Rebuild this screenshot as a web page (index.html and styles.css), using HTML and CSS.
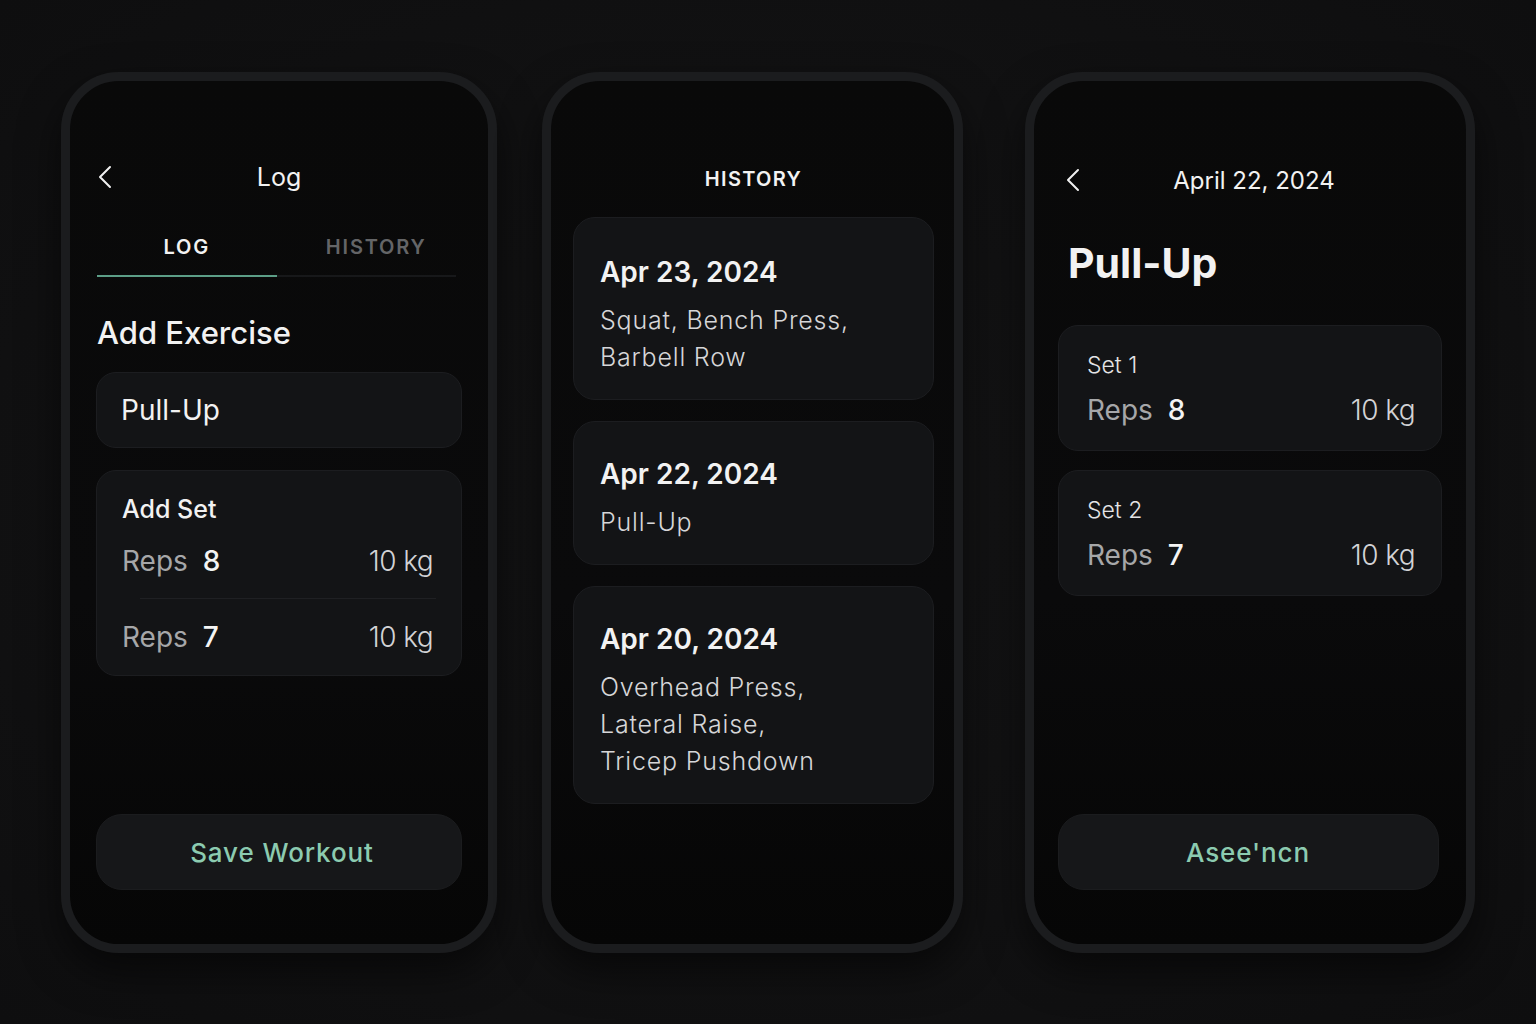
FILE: index.html
```html
<!DOCTYPE html>
<html lang="en">
<head>
    <meta charset="UTF-8">
    <meta name="viewport" content="width=device-width, initial-scale=1.0">
    <title>Workout Log</title>
    <link rel="stylesheet" href="styles.css">
</head>
<body>

    <div class="stage">

        <!-- pantalla 1: registrar -->
        <section class="phone phone-log">
            <header class="topbar">
                <span class="back">
                    <svg width="16" height="24" viewBox="0 0 16 24"><path d="M13 2 L3 12 L13 22" /></svg>
                </span>
                <h1 class="topbar-title">Log</h1>
                <span></span>
            </header>

            <nav class="tabs">
                <span class="tab active">LOG</span>
                <span class="tab tab-history">HISTORY</span>
            </nav>

            <h2 class="section-title">Add Exercise</h2>

            <div class="card input-card">Pull-Up</div>

            <div class="card add-set">
                <div class="add-set-title">Add Set</div>
                <div class="set-row first">
                    <span class="reps">Reps <b class="reps-count">8</b></span>
                    <span class="weight">10 kg</span>
                </div>
                <div class="divider"></div>
                <div class="set-row">
                    <span class="reps">Reps <b class="reps-count">7</b></span>
                    <span class="weight">10 kg</span>
                </div>
            </div>

            <button class="action-button">Save Workout</button>
        </section>

        <!-- pantalla 2: historial -->
        <section class="phone phone-history">
            <h1 class="history-title">HISTORY</h1>

            <div class="card history-card">
                <div class="history-date">Apr 23, 2024</div>
                <div class="history-items">Squat, Bench Press,<br>Barbell Row</div>
            </div>
            <div class="card history-card">
                <div class="history-date">Apr 22, 2024</div>
                <div class="history-items">Pull-Up</div>
            </div>
            <div class="card history-card">
                <div class="history-date">Apr 20, 2024</div>
                <div class="history-items">Overhead Press,<br>Lateral Raise,<br>Tricep Pushdown</div>
            </div>
        </section>

        <!-- pantalla 3: detalle -->
        <section class="phone phone-detail">
            <header class="topbar">
                <span class="back">
                    <svg width="16" height="24" viewBox="0 0 16 24"><path d="M13 2 L3 12 L13 22" /></svg>
                </span>
                <h1 class="topbar-title date-title">April 22, 2024</h1>
                <span></span>
            </header>

            <h2 class="exercise-title">Pull-Up</h2>

            <div class="card set-card">
                <div class="set-label">Set 1</div>
                <div class="set-row">
                    <span class="reps">Reps <b class="reps-count">8</b></span>
                    <span class="weight">10 kg</span>
                </div>
            </div>
            <div class="card set-card">
                <div class="set-label">Set 2</div>
                <div class="set-row">
                    <span class="reps">Reps <b class="reps-count">7</b></span>
                    <span class="weight">10 kg</span>
                </div>
            </div>

            <button class="action-button detail-button">Asee'ncn</button>
        </section>

    </div>

</body>
</html>
```

FILE: styles.css
```css
/* base */

* {
  box-sizing: border-box;
}
body {
  margin: 0;
  background: radial-gradient(ellipse at center, #141415 0%, #111112 60%, #0e0e0f 100%);
  font-family: Inter, "Noto Sans", sans-serif;
  color: #f2f2f2;
  height: 1024px;
  overflow: hidden;
}
h1, h2 {
  margin: 0;
  font-weight: 400;
}

.stage {
  display: flex;
  align-items: flex-start;
  padding: 72px 0 0 61px;
}

/* telefono */

.phone {
  height: 881px;
  border: 9px solid #1b1c1e;
  border-radius: 58px;
  background: linear-gradient(180deg, #090909 0%, #0a0a0b 60%, #060606 100%);
  display: flex;
  flex-direction: column;
  box-shadow: 0 18px 40px rgba(0, 0, 0, 0.55);
}
.phone-log {
  width: 436px;
  margin-right: 45px;
  padding: 76px 26px 54px 26px;
}
.phone-history {
  width: 421px;
  margin-right: 62px;
  padding: 83px 20px 54px 22px;
}
.phone-detail {
  width: 450px;
  padding: 79px 24px 54px 24px;
}

/* cabecera */

.topbar {
  display: grid;
  grid-template-columns: 40px 1fr 40px;
  align-items: center;
  height: 40px;
}
.back {
  display: flex;
  align-items: center;
  padding-left: 1px;
}
.back svg path {
  fill: none;
  stroke: #f0f0f0;
  stroke-width: 2;
  stroke-linecap: round;
  stroke-linejoin: round;
}
.phone-detail .back {
  padding-left: 7px;
}
.topbar-title {
  text-align: center;
  font-size: 25px;
  line-height: 40px;
}
.date-title {
  font-size: 24px;
  padding-left: 8px;
  position: relative;
  top: 1px;
}

/* pestañas */

.tabs {
  display: flex;
  margin: 38px 6px 0 1px;
  border-bottom: 2px solid #17181a;
}
.tab {
  width: 50%;
  text-align: center;
  font-size: 20px;
  font-weight: 600;
  letter-spacing: 1.8px;
  line-height: 24px;
  padding-bottom: 16px;
  color: #646567;
  margin-bottom: -2px;
  border-bottom: 2px solid transparent;
}
.tab.active {
  color: #f2f2f2;
  border-bottom-color: #5c9e87;
}
.tab-history {
  text-indent: 20px;
}

.section-title {
  font-size: 31px;
  font-weight: 500;
  line-height: 38px;
  margin-top: 37px;
  margin-left: 1px;
}

/* tarjetas */

.card {
  background: #131416;
  border: 1px solid #1c1d20;
  border-radius: 20px;
}
.input-card {
  margin-top: 20px;
  height: 76px;
  display: flex;
  align-items: center;
  padding-left: 24px;
  font-size: 28px;
}
.add-set {
  margin-top: 22px;
  padding: 23px 28px 21px 25px;
}
.add-set-title {
  font-size: 25px;
  font-weight: 500;
  line-height: 30px;
}
.set-row {
  display: flex;
  justify-content: space-between;
  align-items: baseline;
  line-height: 34px;
  font-size: 28px;
}
.set-row.first {
  margin-top: 20px;
}
.reps {
  color: #a6a7a9;
}
.reps-count {
  color: #f4f4f4;
  font-weight: 500;
  margin-left: 7px;
}
.weight {
  color: #d2d3d5;
  font-weight: 300;
  letter-spacing: -0.6px;
}
.divider {
  height: 1px;
  background: #1f2023;
  margin: 20px 0 21px 18px;
  margin-right: -3px;
}

/* boton */

.action-button {
  margin-top: auto;
  height: 76px;
  width: 100%;
  border-radius: 26px;
  background: #161719;
  border: 1px solid #1b1c1e;
  color: #8ccbb0;
  font-family: Inter, "Noto Sans", sans-serif;
  font-size: 26px;
  font-weight: 500;
  letter-spacing: 0.9px;
  padding-left: 12px;
  cursor: pointer;
}
.detail-button {
  width: 381px;
  padding-left: 5px;
}

/* historial */

.history-title {
  text-align: center;
  font-size: 20px;
  font-weight: 600;
  letter-spacing: 1.3px;
  line-height: 28px;
  position: relative;
  top: 1px;
}
.history-card {
  padding: 35px 26px 23px 26px;
  border-radius: 22px;
  margin-top: 21px;
}
.phone-history .history-title + .history-card {
  margin-top: 25px;
  padding-top: 37px;
}
.history-date {
  font-size: 28px;
  font-weight: 600;
  line-height: 34px;
}
.history-items {
  margin-top: 13px;
  font-size: 25px;
  font-weight: 300;
  line-height: 37px;
  color: #d6d6d8;
  letter-spacing: 0.8px;
}

/* detalle */

.exercise-title {
  font-size: 41px;
  font-weight: 700;
  line-height: 50px;
  margin-top: 38px;
  margin-left: 10px;
}
.set-card {
  margin-top: 19px;
  padding: 25px 26px 22px 28px;
  height: 126px;
}
.phone-detail .exercise-title + .set-card {
  margin-top: 37px;
}
.set-label {
  font-size: 23px;
  line-height: 28px;
  color: #e4e4e6;
  font-weight: 300;
}
.set-card .set-row {
  margin-top: 14px;
}
```
